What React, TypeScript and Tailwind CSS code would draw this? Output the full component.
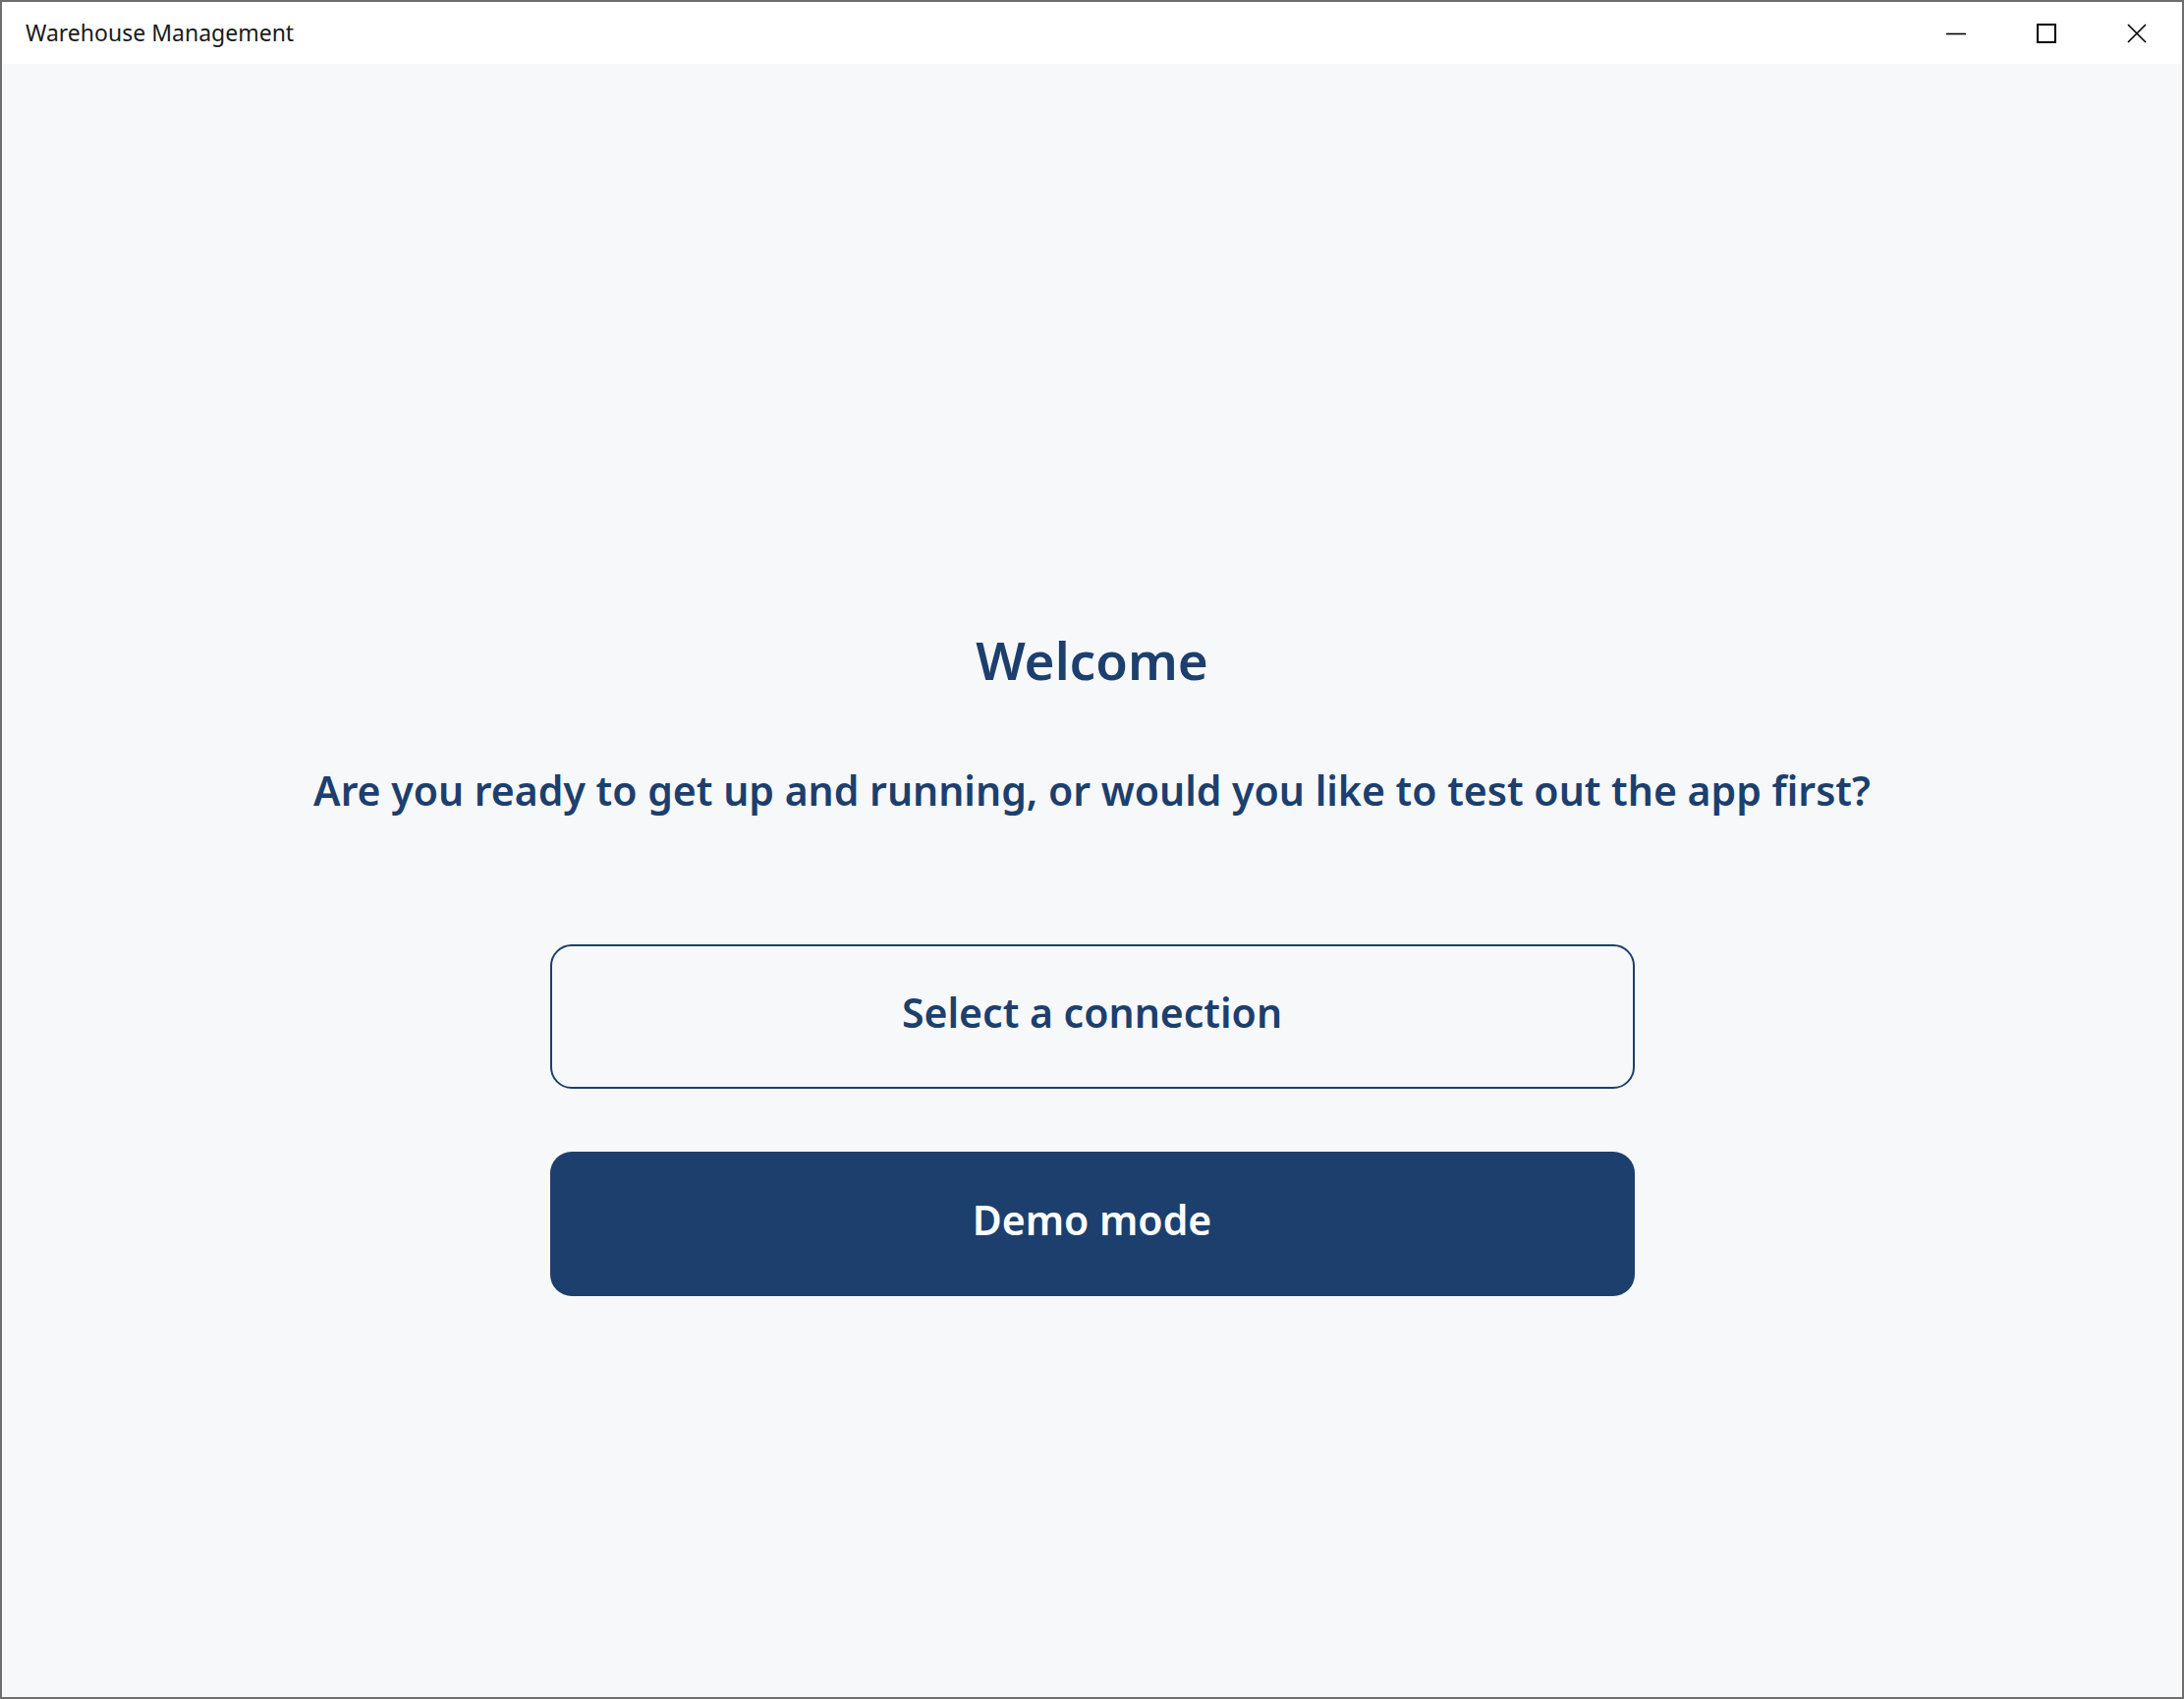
import { Minus, Square, X } from 'lucide-react'

const font = { fontFamily: '"Segoe UI", "Noto Sans", "Open Sans", sans-serif' }

const App = () => {
  return (
    <div
      className="w-[2223px] h-[1729px] flex flex-col border-2 border-[#6e6e6e] bg-[#f7f8fa] overflow-hidden"
      style={font}
    >
      {/* Title bar */}
      <div className="h-[63px] bg-white flex items-center justify-between shrink-0">
        <span className="pl-[24px] text-[23px] text-[#1a1a1a]">Warehouse Management</span>
        <div className="flex h-full">
          <button className="w-[92px] h-full flex items-center justify-center text-black">
            <svg width="20" height="20" viewBox="0 0 20 20">
              <line x1="0" y1="10.5" x2="20" y2="10.5" stroke="black" strokeWidth="1.6" />
            </svg>
          </button>
          <button className="w-[92px] h-full flex items-center justify-center text-black">
            <svg width="20" height="20" viewBox="0 0 20 20">
              <rect x="1" y="1" width="18" height="18" fill="none" stroke="black" strokeWidth="2" />
            </svg>
          </button>
          <button className="w-[92px] h-full flex items-center justify-center text-black">
            <svg width="20" height="20" viewBox="0 0 20 20">
              <path d="M1 1 L19 19 M19 1 L1 19" stroke="black" strokeWidth="1.6" />
            </svg>
          </button>
        </div>
      </div>

      {/* Welcome content */}
      <div className="flex-1 flex flex-col items-center pt-[580px] text-[#1c3f6e]">
        <h1 className="text-[53px] leading-none font-semibold">Welcome</h1>
        <p className="mt-[86px] text-[41px] leading-none font-semibold">
          Are you ready to get up and running, or would you like to test out the app first?
        </p>
        <button className="mt-[136px] w-[1104px] h-[147px] pb-[8px] rounded-[22px] border-2 border-[#1c3f6e] text-[41px] font-semibold text-[#1c3f6e]">
          Select a connection
        </button>
        <button className="mt-[64px] w-[1104px] h-[147px] pb-[8px] rounded-[22px] bg-[#1c3f6e] text-[41px] font-semibold text-white">
          Demo mode
        </button>
      </div>
    </div>
  )
}

export default App
